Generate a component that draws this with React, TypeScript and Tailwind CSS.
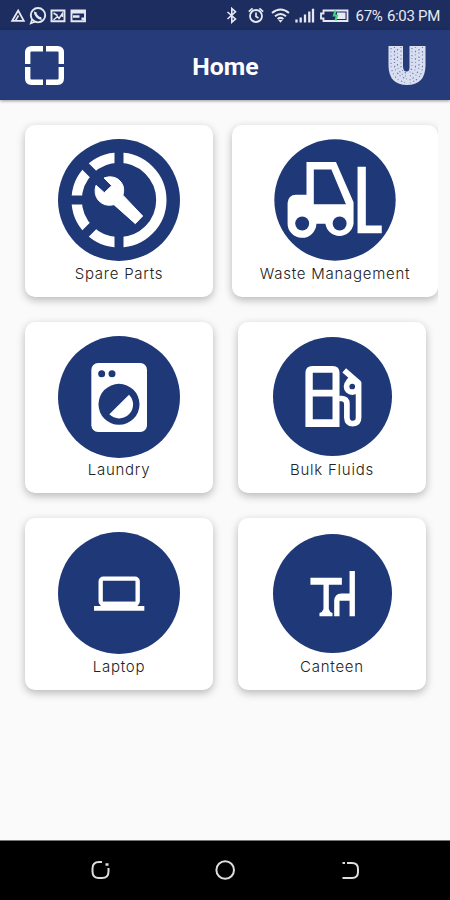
import type { ReactNode } from "react";

const NAVY = "#1f3878";

function StatusBar() {
  return (
    <div className="flex h-[30px] items-center justify-between bg-[#1d2d5f] pr-[10px] pl-[10px]">
      <svg width="80" height="20" viewBox="0 0 80 20" fill="none" stroke="#e6e9f2" className="mt-[2px]">
        <path d="M8.200 4.500L2.200 14.800H13.800Z" strokeWidth="1.800" />
        <path d="M8.500 9.500L5.500 14.500" strokeWidth="1.500" />
        <circle cx="28" cy="9.200" r="7.200" strokeWidth="1.900" />
        <path d="M22.200 13L20.800 17.300L25 15.800" strokeWidth="1.700" />
        <path d="M25.300 5.800c-.8 3 3.500 7.200 6.200 6.400" strokeWidth="2.600" />
        <path d="M41.500 4.500H54.500V15.200H41.500Z" strokeWidth="1.900" />
        <path d="M43.500 7L47.500 9.500M43.500 14L47.500 10.500L49 12.500L52.500 7.500V11" strokeWidth="1.500" />
        <path d="M61.500 4.500H75V15.200H61.500Z" strokeWidth="1.900" />
        <path d="M61 6.200H75.500M63 10.500H69.500M71.500 12.800H75" strokeWidth="2.600" />
      </svg>
      <div className="mt-[2px] flex items-center">
        <svg width="124" height="20" viewBox="0 0 124 20" fill="none" stroke="#e6e9f2" className="mr-[4px]">
          <path d="M1.500 6l8 7L5.800 16.200V2.500l3.700 3.300-8 7.200" strokeWidth="1.600" />
          <circle cx="30" cy="10" r="6" strokeWidth="1.800" />
          <path d="M30 6.500v4l2.500 1.500M22.800 5.700l3.800-3.400M37.200 5.700l-3.800-3.400" strokeWidth="1.700" />
          <path d="M46 7q8.500-7 17 0M49 10.200q5.500-4.500 11 0M51.600 13q2.900-2.200 5.800 0" strokeWidth="2" />
          <path d="M52.300 14h4.400l-2.200 2.800Z" fill="#e6e9f2" stroke="none" />
          <path d="M70.500 13.500v3M74.700 11.500v5M79 8.500v8M83.300 5.500v11M87 2.700v13.800" strokeWidth="2.300" />
          <path d="M97.500 4.500h24V15h-24v-2.500H95v-5h2.500Z" strokeWidth="1.800" />
          <path d="M111 6.500h8.500v6.500h-8.500Z" fill="#e6e9f2" stroke="none" />
          <path d="M109.500 4.500l-1.500 5h3l-1.500 5" stroke="#3fd67c" strokeWidth="2.200" />
        </svg>
        <span className="w-[86px] text-right text-[15px] leading-5 tracking-[-0.3px] whitespace-nowrap text-[#e6e9f2]">
          67% <span className="ml-[1px]">6:03 PM</span>
        </span>
      </div>
    </div>
  );
}

function Header() {
  return (
    <header className="relative z-10 grid h-[70px] grid-cols-3 items-center bg-[#263b79] pr-[24px] pl-[25px] shadow-[0_1px_3px_rgba(0,0,0,0.4)]">
      <svg width="39" height="39" viewBox="0 0 39 39" fill="none" stroke="#fff" strokeWidth="5.400" className="mt-[1px]">
        <path d="M18 2.700H6.500Q2.700 2.700 2.700 6.500V18M21 2.700H32.500Q36.300 2.700 36.300 6.500V18M2.700 21V32.500Q2.700 36.300 6.500 36.300H18M36.300 21V32.500Q36.300 36.300 32.500 36.300H21" />
      </svg>
      <h1 className="pt-[4px] text-center text-[24.800px] leading-none font-bold text-white">Home</h1>
      <svg width="38" height="40" viewBox="0 0 38 40" className="mt-[1px] justify-self-end">
        <path d="M.5 0H15V20Q15 25.500 18.500 25.500T21.500 20V0H37.500V20Q37 39 19 39T.5 20Z" fill="#d9def0" />
        {/* speckles that break up the solid letter */}
        <g fill="none" stroke="#6a7baf" strokeWidth="1.100">
          <path d="M3 2V19Q4 33 17 36.500" strokeDasharray="1.200 2.300 .8 3.100" />
          <path d="M6.500 1V20Q8 30 19 33" strokeDasharray="1 2.800 1.600 2.100" />
          <path d="M9.500 3V20Q11 28 18 30" strokeDasharray="1.500 2.400 .7 2.900" />
          <path d="M13 1V21Q14 26 19 27.500" strokeDasharray=".9 2.600 1.300 3" />
          <path d="M24 2V21Q23 26 20 28" strokeDasharray="1.300 2.100 .8 2.700" />
          <path d="M27.500 1V20Q27 28 20 31" strokeDasharray=".8 2.900 1.500 2.300" />
          <path d="M31 3V20Q30 31 21 34" strokeDasharray="1.400 2.200 .9 3" />
          <path d="M34.500 1V20Q34 33 22 37" strokeDasharray="1 3 1.400 2" />
        </g>
      </svg>
    </header>
  );
}

function SparePartsIcon() {
  return (
    <svg viewBox="130 73 366 366" className="size-[122px]">
      <circle cx="313" cy="256" r="183" fill={NAVY} />
      <circle cx="313" cy="256" r="127" fill="none" stroke="#fff" strokeWidth="31" />
      <path d="M313 90V160M313 350V420M160 256H215M244 187L190 133M244 325L190 379" stroke={NAVY} strokeWidth="27" />
      <path
        d="M268 190Q292 181 311 194Q333 211 325 242L384 304L362 327L298 270Q269 277 251 257Q236 237 244 212L269 234L291 213Z"
        fill="#fff"
        stroke="#fff"
        strokeWidth="3"
        strokeLinejoin="round"
      />
    </svg>
  );
}

function ForkliftIcon() {
  return (
    <svg viewBox="146 72 368 368" className="size-[122px]">
      <circle cx="330" cy="256" r="183" fill={NAVY} />
      <path
        d="M244 141H333L386 263V328A43 43 0 0 1 301 328H274A43 43 0 0 1 187 325V264Q189 241 212 240H244Z"
        fill="#fff"
      />
      <path d="M266 164H319L363 269H266Z" fill={NAVY} />
      <circle cx="231" cy="327" r="21" fill={NAVY} />
      <circle cx="344" cy="327" r="21" fill={NAVY} />
      <path d="M398 156H423V333H471V356H398Z" fill="#fff" />
    </svg>
  );
}

function LaundryIcon() {
  return (
    <svg viewBox="130 75 366 366" className="size-[122px]">
      <circle cx="313" cy="258" r="183" fill={NAVY} />
      <rect x="230" y="156" width="167" height="207" rx="20" fill="#fff" />
      <circle cx="261" cy="188" r="10.500" fill={NAVY} />
      <circle cx="292" cy="188" r="10.500" fill={NAVY} />
      <circle cx="313" cy="280" r="61.500" fill={NAVY} />
      <path d="M343 251A41 41 0 0 1 284 310Z" fill="#fff" />
    </svg>
  );
}

function FuelIcon() {
  return (
    <svg viewBox="142 82 356 356" className="size-[119px]">
      <circle cx="320" cy="260" r="178" fill={NAVY} />
      <path d="M239 351V190Q239 169 260 169H321Q341 169 341 190V351Z" fill="#fff" />
      <path d="M261 189H320V240H261ZM261 260H320V328H261Z" fill={NAVY} />
      <g fill="none" stroke="#fff" strokeWidth="17" strokeLinejoin="round">
        <path d="M340 266H348Q363 267 363 282V323Q364 341 381 341Q398 341 398 323V219L355 182" />
        <circle cx="379" cy="230" r="17" />
        <path d="M367 218L378 203" />
      </g>
    </svg>
  );
}

function LaptopIcon() {
  return (
    <svg viewBox="130 79 366 366" className="size-[122px]">
      <circle cx="313" cy="262" r="183" fill={NAVY} />
      <rect x="258" y="219" width="111" height="76" rx="8" fill="none" stroke="#fff" strokeWidth="13" />
      <path d="M238 301H389V315H238Z" fill="#fff" />
      <path d="M258 288H369V303H258Z" fill="#fff" />
    </svg>
  );
}

function CanteenIcon() {
  return (
    <svg viewBox="142 85 356 356" className="size-[119px]">
      <circle cx="320" cy="263" r="178" fill={NAVY} />
      <path d="M254 216H348V237H309V309Q311 318 320 321V331H281V321Q291 318 293 309V237H254Z" fill="#fff" />
      <path d="M371 196H387V331H371V285H341V331H325V285Q326 264 346 263H371Z" fill="#fff" />
    </svg>
  );
}

function Card({ icon, label, className }: { icon: ReactNode; label: string; className: string }) {
  return (
    <div
      className={`flex flex-col items-center rounded-[10px] bg-white shadow-[0_3px_9px_rgba(0,0,0,0.27)] ${className}`}
    >
      {icon}
      <span className="mt-auto mb-[13px] font-['Inter'] text-[15px] leading-5 font-light tracking-[0.75px] whitespace-nowrap text-[#222]">
        {label}
      </span>
    </div>
  );
}

function NavBar() {
  return (
    <nav className="flex h-[60px] items-center justify-between border-t border-[#777] bg-black px-[90px] pb-[1px]">
      <svg width="20" height="20" viewBox="0 0 20 20" fill="none" stroke="#ddd" strokeWidth="2">
        <path d="M12 2H9Q2.500 2 2.500 8.500V11.500Q2.500 18 9 18H12Q18.500 18 18.500 11.500V8" />
        <path d="M15.500 4.500h3" strokeWidth="2.500" />
      </svg>
      <svg width="20" height="20" viewBox="0 0 20 20" fill="none" stroke="#ddd" strokeWidth="2">
        <circle cx="10.200" cy="10" r="8.800" />
      </svg>
      <svg width="20" height="20" viewBox="0 0 20 20" fill="none" stroke="#ddd" strokeWidth="2">
        <path d="M7 3H12Q18 3 18 9V12Q18 18 12 18H2.500M2.500 3H5" />
      </svg>
    </nav>
  );
}

export default function App() {
  return (
    <div className="flex h-[900px] w-[450px] flex-col overflow-hidden bg-[#fafafa] font-['Roboto',sans-serif]">
      <StatusBar />
      <Header />
      <main className="flex-1">
        <div className="mr-[12px] flex h-[602px] flex-col gap-[25px] overflow-hidden pt-[25px] pl-[25px]">
          <div className="flex shrink-0 gap-[19px]">
            <Card className="h-[172px] w-[188px] pt-[14px]" icon={<SparePartsIcon />} label="Spare Parts" />
            <Card className="h-[172px] w-[206px] pt-[14px]" icon={<ForkliftIcon />} label="Waste Management" />
          </div>
          <div className="flex shrink-0 gap-[25px]">
            <Card className="h-[171px] w-[188px] pt-[14px]" icon={<LaundryIcon />} label="Laundry" />
            <Card className="h-[171px] w-[188px] pt-[15px]" icon={<FuelIcon />} label="Bulk Fluids" />
          </div>
          <div className="flex shrink-0 gap-[25px]">
            <Card className="h-[172px] w-[188px] pt-[14px]" icon={<LaptopIcon />} label="Laptop" />
            <Card className="h-[172px] w-[188px] pt-[16px]" icon={<CanteenIcon />} label="Canteen" />
          </div>
        </div>
      </main>
      <NavBar />
    </div>
  );
}
